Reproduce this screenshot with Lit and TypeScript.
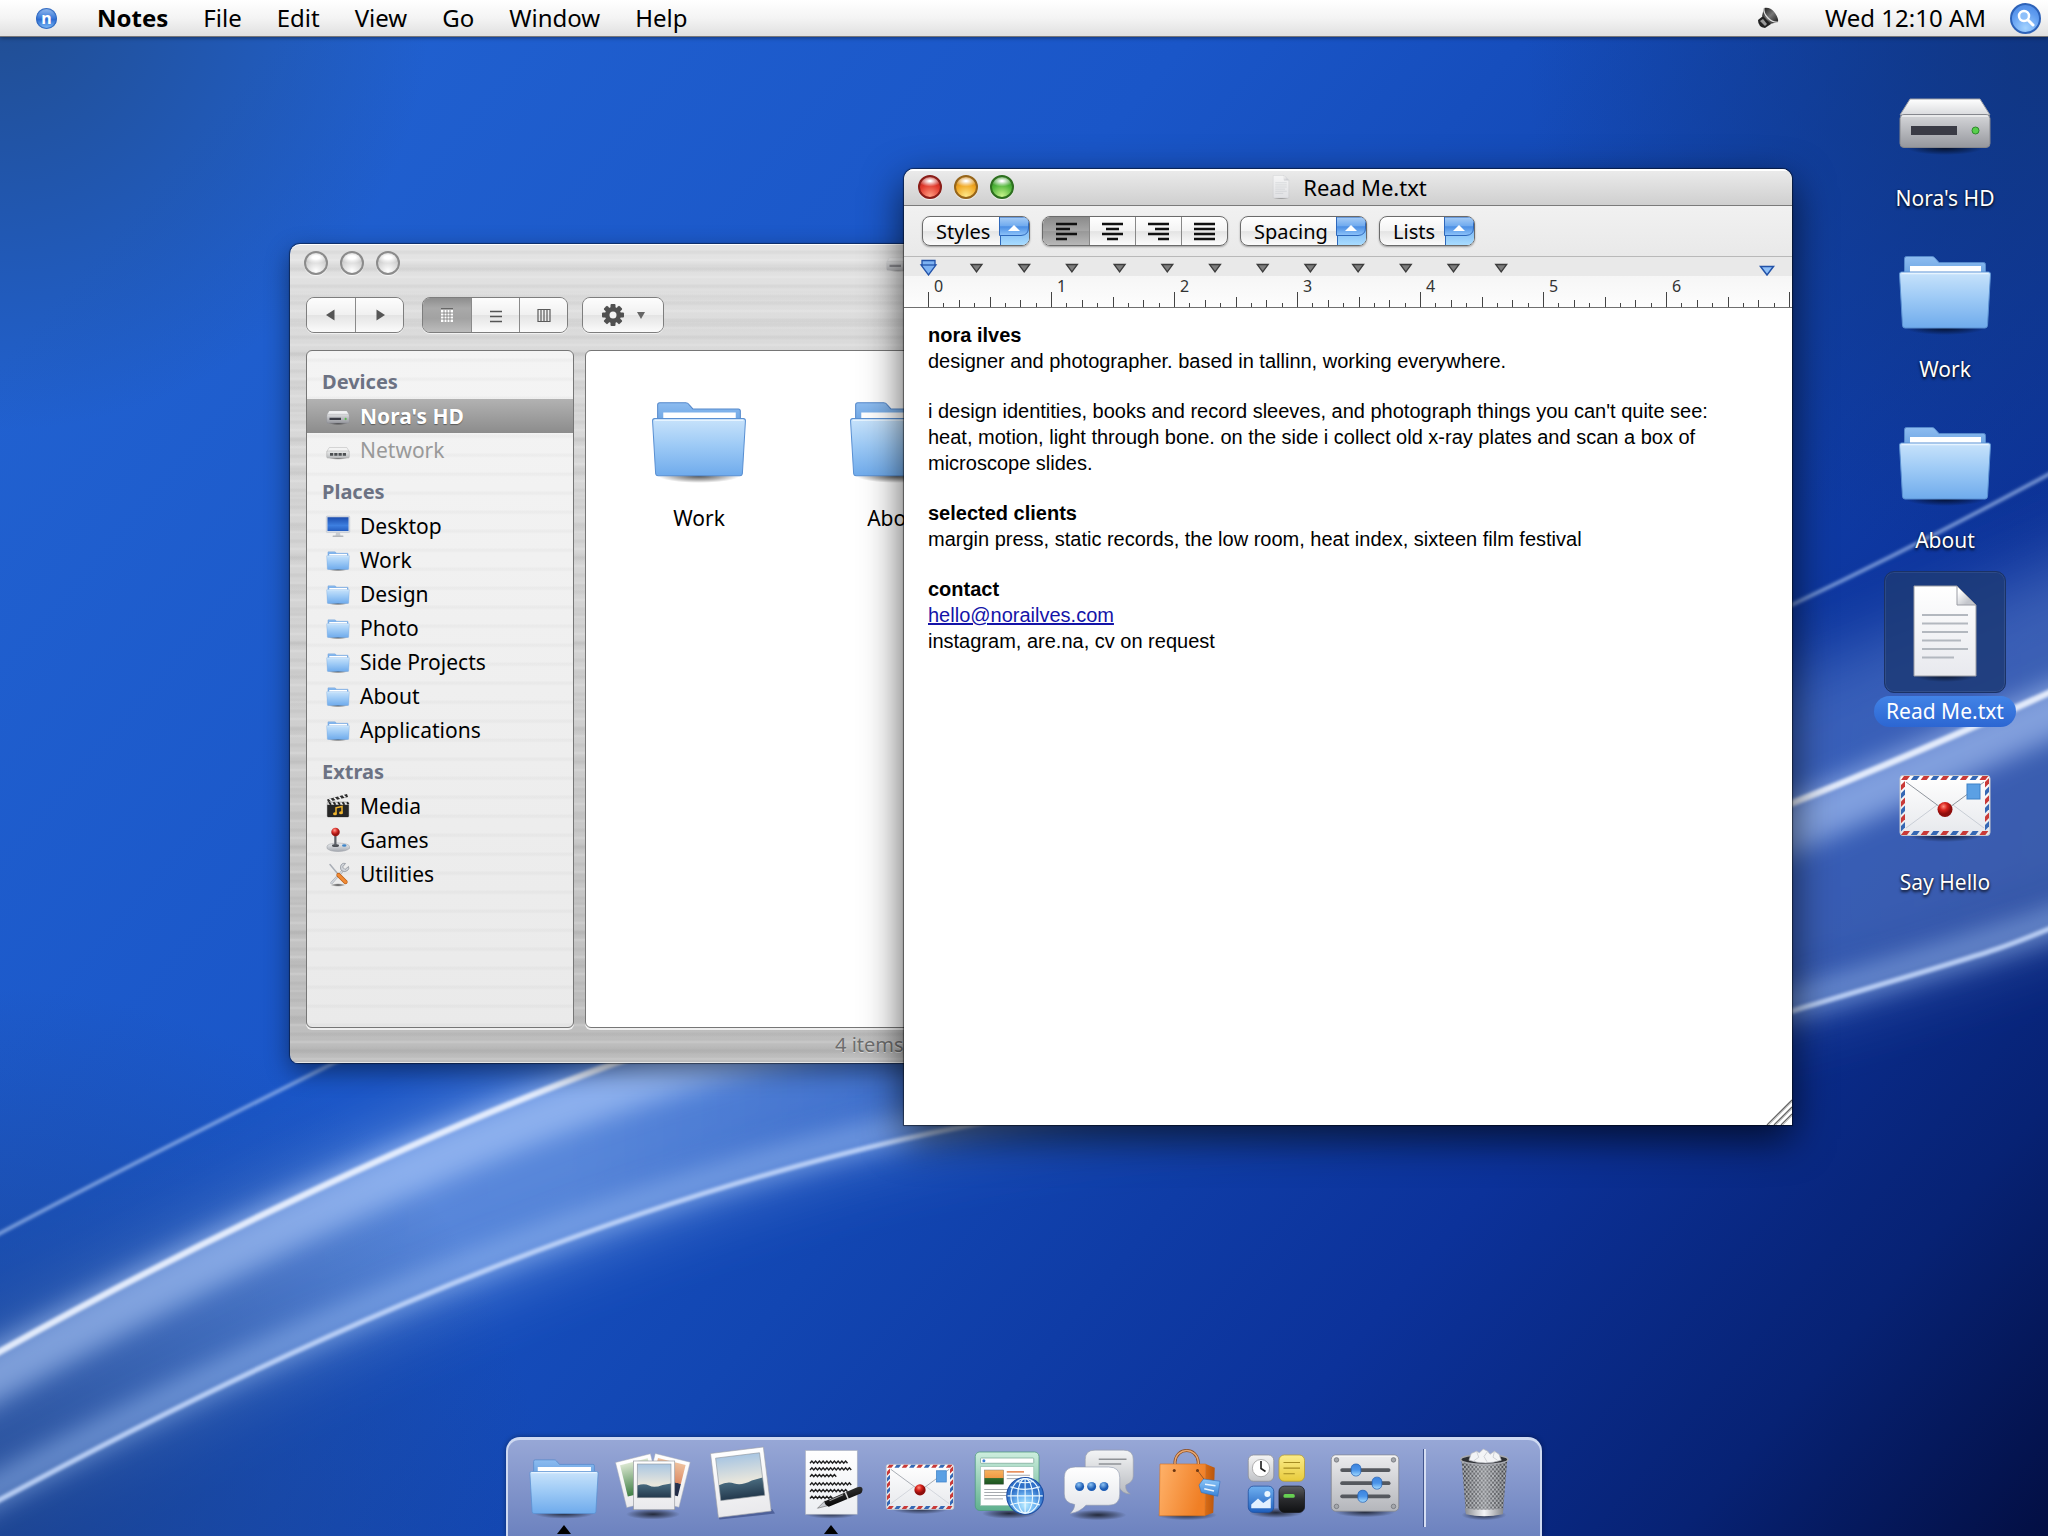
import { LitElement, html, svg, css, nothing } from "lit";
import { customElement, property } from "lit/decorators.js";
import { classMap } from "lit/directives/class-map.js";

/* ---------- icon artwork, all on a 96 x 96 grid ---------- */

const shadow = (cy: number, rx = 38) =>
  svg`<ellipse cx="48" cy=${cy} rx=${rx} ry="7" fill="url(#sh)" />`;

const folder = () => svg`
  <defs>
    <linearGradient id="fa" x2="0" y2="1"><stop offset="0" stop-color="#c8e3fb"/><stop offset=".45" stop-color="#9fcbf6"/><stop offset="1" stop-color="#6fabec"/></linearGradient>
    <linearGradient id="fb" x2="0" y2="1"><stop offset="0" stop-color="#8dbcf0"/><stop offset="1" stop-color="#6ea6e4"/></linearGradient>
  </defs>
  ${shadow(86, 40)}
  <path d="M7.500 32V16.500Q7.500 14.500 9.500 14.500H35Q37 14.500 38 16L42 20.500H86.500Q88.500 20.500 88.500 22.500V32Z" fill="url(#fb)" stroke="#5689cb"/>
  <path d="M13 24H84V32H13Z" fill="#fff"/>
  <path d="M2.500 32Q2.500 30 4.500 30H91.500Q93.500 30 93.500 32L90.500 83.500Q90.300 86 88 86H8Q5.700 86 5.500 83.500Z" fill="url(#fa)" stroke="#5a90d2"/>
  <path d="M4.500 31.500H91.500" stroke="#e6f4ff" stroke-width="1.500"/>`;

const drive = () => svg`
  <defs>
    <linearGradient id="da" x2="0" y2="1"><stop offset="0" stop-color="#fff"/><stop offset="1" stop-color="#d9dadd"/></linearGradient>
    <linearGradient id="db" x2="0" y2="1"><stop offset="0" stop-color="#d6d7da"/><stop offset="1" stop-color="#95979d"/></linearGradient>
  </defs>
  ${shadow(77)}
  <path d="M13 28H83L93 44H3Z" fill="url(#da)" stroke="#9b9da3"/>
  <rect x="3" y="43.500" width="90" height="33" rx="4" fill="url(#db)" stroke="#85878d"/>
  <path d="M5 45H91" stroke="#fff"/>
  <rect x="14" y="55" width="46" height="9" fill="#3a3b45"/>
  <circle cx="78.500" cy="59.500" r="3.500" fill="#58cf4c" stroke="#2c8a2a"/>`;

const network = () => svg`
  <defs>
    <linearGradient id="na" x2="0" y2="1"><stop offset="0" stop-color="#eceded"/><stop offset="1" stop-color="#b9bbbd"/></linearGradient>
  </defs>
  ${shadow(80)}
  <path d="M13 38H83L93 54H3Z" fill="#f3f3f3" stroke="#b5b5b5" stroke-width="2"/>
  <rect x="3" y="52" width="90" height="28" rx="4" fill="url(#na)" stroke="#a5a5a5" stroke-width="2"/>
  <path d="M16 60h13v11h-13zM33 60h13v11h-13zM50 60h13v11h-13zM67 60h13v11h-13z" fill="#4c4f52"/>`;

const monitor = () => svg`
  <defs>
    <linearGradient id="ma" x2="0" y2="1"><stop offset="0" stop-color="#1b4cae"/><stop offset=".6" stop-color="#3d7fe0"/><stop offset="1" stop-color="#245dc0"/></linearGradient>
  </defs>
  <rect x="1" y="8" width="94" height="66" rx="4" fill="#d5dbe4" stroke="#b8bec8" stroke-width="2"/>
  <rect x="6" y="13" width="84" height="55" fill="url(#ma)"/>
  <path d="M40 74H56L58 88H38Z" fill="#c9ccd1"/>
  <rect x="26" y="86" width="44" height="6" rx="3" fill="#b4b7bc"/>`;

const page = () => svg`
  <defs>
    <linearGradient id="pa" x2="0" y2="1"><stop offset="0" stop-color="#fff"/><stop offset="1" stop-color="#e8e9ee"/></linearGradient>
    <linearGradient id="pb" x2="1" y2="1"><stop offset=".2" stop-color="#fff"/><stop offset=".7" stop-color="#c4c6cc"/></linearGradient>
  </defs>
  ${shadow(91, 33)}
  <path d="M17 2H60L79 21V92H17Z" fill="url(#pa)" stroke="#9a9ca4"/>
  <path d="M60 2V21H79Z" fill="url(#pb)" stroke="#9a9ca4"/>
  <path d="M25 31H71M25 39.500H71M25 48H71M25 56.500H64M25 65H71M25 73.500H57" stroke="#b3b8bf" stroke-width="2"/>`;

const stripeRow = (x: number, y: number, n: number, step: number, vertical: boolean) =>
  Array.from({ length: n }, (_, i) => {
    const fill = i % 2 ? "#3568b4" : "#c93a38";
    const px = vertical ? x : x + i * step;
    const py = vertical ? y + i * step : y;
    return vertical
      ? svg`<path d="M${px} ${py + 4}L${px + 4} ${py}V${py + 5.500}L${px} ${py + 9.500}Z" fill=${fill}/>`
      : svg`<path d="M${px} ${py + 4}L${px + 3} ${py}H${px + 9}L${px + 6} ${py + 4}Z" fill=${fill}/>`;
  });

const mail = () => svg`
  <defs>
    <linearGradient id="ea" x2="0" y2="1"><stop offset="0" stop-color="#fff"/><stop offset="1" stop-color="#e6e8ec"/></linearGradient>
    <radialGradient id="eb" cx=".4" cy=".3"><stop offset="0" stop-color="#ff8f80"/><stop offset=".5" stop-color="#d9231c"/><stop offset="1" stop-color="#8e0d0c"/></radialGradient>
  </defs>
  ${shadow(80)}
  <rect x="3" y="20.500" width="90" height="60" rx="3" fill="url(#ea)" stroke="#c3c7cf"/>
  ${stripeRow(4, 21, 9, 9.800, false)}
  ${stripeRow(4, 76, 9, 9.800, false)}
  ${stripeRow(4, 26, 6, 8.200, true)}
  ${stripeRow(88, 23, 6, 8.600, true)}
  <path d="M9 73L40 50M87 73L56 50" stroke="#c9ced6"/>
  <path d="M9 27L43 52M87 27L53 52" stroke="#8f959d"/>
  <rect x="70" y="29" width="13" height="15" fill="#5ba0e4" stroke="#3f82c8"/>
  <circle cx="48" cy="54.500" r="7.500" fill="url(#eb)"/>`;

const scene = (w: number, h: number) => svg`
  <rect width=${w} height=${h} fill="url(#sky)"/>
  <path d="M0 ${h * 0.640}Q${w * 0.200} ${h * 0.560} ${w * 0.350} ${h * 0.640}T${w * 0.750} ${h * 0.620}L${w} ${h * 0.580}V${h}H0Z" fill="url(#sea)"/>
  <rect width=${w} height=${h} fill="none" stroke="#8d949c" stroke-width=".8"/>`;

const sceneDefs = svg`
  <linearGradient id="sky" x2="0" y2="1"><stop offset="0" stop-color="#a9c6e2"/><stop offset=".6" stop-color="#e8e6dc"/></linearGradient>
  <linearGradient id="sea" x2="0" y2="1"><stop offset="0" stop-color="#4a6c80"/><stop offset="1" stop-color="#23394d"/></linearGradient>
  <linearGradient id="card" x2="0" y2="1"><stop offset="0" stop-color="#fff"/><stop offset="1" stop-color="#e9e9ec"/></linearGradient>`;

const photos = () => svg`
  <defs>${sceneDefs}
    <linearGradient id="gr" x2="0" y2="1"><stop offset="0" stop-color="#d9e6cf"/><stop offset="1" stop-color="#3f7f45"/></linearGradient>
    <linearGradient id="or" x2="0" y2="1"><stop offset="0" stop-color="#eec09c"/><stop offset=".6" stop-color="#dd8c66"/><stop offset=".62" stop-color="#2a3450"/><stop offset="1" stop-color="#1f2944"/></linearGradient>
  </defs>
  ${shadow(87, 36)}
  <g transform="translate(-2 18) rotate(-14)"><rect width="48" height="62" fill="url(#card)" stroke="#a9adb5" stroke-width=".6"/><rect x="5" y="5" width="38" height="43" fill="url(#gr)"/></g>
  <g transform="translate(51 6) rotate(14)"><rect width="48" height="62" fill="url(#card)" stroke="#a9adb5" stroke-width=".6"/><rect x="5" y="5" width="38" height="43" fill="url(#or)"/></g>
  <rect x="22" y="16" width="55" height="65" fill="url(#card)" stroke="#8c9097" stroke-width=".8"/>
  <g transform="translate(27 20)">${scene(45, 45)}</g>`;

const polaroid = () => svg`
  <defs>${sceneDefs}</defs>
  <path d="M18 94L92 86L88 80L16 88Z" fill="#14245c" opacity=".4"/>
  <g transform="translate(6 6) rotate(-7)"><rect width="71" height="86" fill="url(#card)" stroke="#9da1a9" stroke-width=".8"/><g transform="translate(6 7)">${scene(59, 57)}</g></g>`;

const squiggle = (x2: number, y: number) => {
  let d = `M20 ${y}`;
  for (let x = 20; x < x2; x += 5) d += `l2.500 -3l2.500 3`;
  return svg`<path d=${d} fill="none" stroke="#1e1e1e" stroke-width="1.800"/>`;
};

const notes = () => svg`
  <defs>
    <linearGradient id="ta" x2="0" y2="1"><stop offset="0" stop-color="#fff"/><stop offset="1" stop-color="#eceef2"/></linearGradient>
    <linearGradient id="tb" x2=".4" y2="1"><stop offset="0" stop-color="#8a8a8a"/><stop offset=".35" stop-color="#2c2c2c"/><stop offset="1" stop-color="#000"/></linearGradient>
  </defs>
  ${shadow(86, 36)}
  <rect x="14" y="2" width="69" height="85" fill="url(#ta)" stroke="#aeb3bf" stroke-width=".8"/>
  ${squiggle(67, 19)}${squiggle(72, 28)}${squiggle(54, 37)}
  ${squiggle(72, 48)}${squiggle(70, 57)}${squiggle(46, 66)}
  <path d="M30 79L40 69L46 75Z" fill="#c9ccd2" stroke="#666" stroke-width=".8"/>
  <path d="M39 70L83 51Q90 49 90 54Q90 58 86 60L45 77Q40 75 39 70Z" fill="url(#tb)"/>
  <path d="M67 57.500L71 67" stroke="#d6d6d6" stroke-width="2"/>
  <path d="M46 69L64 61" stroke="#9a9a9a" stroke-width="1.500"/>`;

const browser = () => svg`
  <defs>
    <linearGradient id="wa" x2="0" y2="1"><stop offset="0" stop-color="#cdeede"/><stop offset="1" stop-color="#5fb08e"/></linearGradient>
    <linearGradient id="wb" x2="0" y2="1"><stop offset="0" stop-color="#f7b35f"/><stop offset=".55" stop-color="#f09a45"/><stop offset=".6" stop-color="#2f6b2d"/><stop offset="1" stop-color="#1d5320"/></linearGradient>
    <radialGradient id="wc" cx=".5" cy=".75"><stop offset="0" stop-color="#b9ecff"/><stop offset=".5" stop-color="#72b8f4"/><stop offset="1" stop-color="#2f70c8"/></radialGradient>
  </defs>
  ${shadow(86, 36)}
  <rect x="3" y="4" width="85" height="78" rx="6" fill="url(#wa)" stroke="#4d9a7c"/>
  <rect x="10" y="12" width="71" height="7" rx="1" fill="#fff" stroke="#7aa895"/>
  <circle cx="14.500" cy="15.500" r="2" fill="#3c7fd6"/>
  <rect x="10" y="23.500" width="71" height="52" fill="#fff" stroke="#9cc5b4"/>
  <rect x="15" y="28" width="26" height="19" fill="url(#wb)" stroke="#777" stroke-width=".6"/>
  <path d="M45 30.500H68" stroke="#e4824a" stroke-width="2"/>
  <path d="M45 35H76M45 39.500H64M15 54H50M15 58H46M15 62H44M15 66.500H40" stroke="#a3a8ad" stroke-width="1.300"/>
  <circle cx="69.500" cy="62.500" r="24.500" fill="url(#wc)" stroke="#1d4fa5" stroke-width="1.500"/>
  <g fill="none" stroke="#eaf8ff" stroke-width="1.500">
    <ellipse cx="69.500" cy="62.500" rx="10" ry="23"/><ellipse cx="69.500" cy="62.500" rx="19" ry="23"/>
    <path d="M69.500 39V86M46 62.500H93M50 50.500Q69.500 57 89 50.500M50 74.500Q69.500 68 89 74.500M58 43Q69.500 47 81 43"/>
  </g>`;

const chat = () => svg`
  <defs>
    <linearGradient id="ca" x2="0" y2="1"><stop offset="0" stop-color="#fff"/><stop offset="1" stop-color="#e2e4e9"/></linearGradient>
    <linearGradient id="cb" x2="0" y2="1"><stop offset="0" stop-color="#f4f5f6"/><stop offset="1" stop-color="#b7babf"/></linearGradient>
    <radialGradient id="cc" cx=".4" cy=".3"><stop offset="0" stop-color="#8cc3f5"/><stop offset="1" stop-color="#1d5cb4"/></radialGradient>
  </defs>
  ${shadow(88, 38)}
  <path d="M44 1.500H82Q95 1.500 95 14V36Q95 44 85 48Q84 56 91 60Q80 60 75 49H44Q31 49 31 36V14Q31 1.500 44 1.500Z" fill="url(#cb)" stroke="#9b9fa8" stroke-width=".8"/>
  <path d="M49 13.500H86M49 20H79" stroke="#8f9296" stroke-width="2"/>
  <path d="M18 24H62Q77 24 77 38V60Q77 75 62 75H32Q24 84 11 86Q17 80 17 74Q3 72 3 60V38Q3 24 18 24Z" fill="url(#ca)" stroke="#8d97ad" stroke-width=".8"/>
  <circle cx="23.500" cy="50" r="6" fill="url(#cc)"/><circle cx="39.500" cy="50" r="6" fill="url(#cc)"/><circle cx="56" cy="50" r="6" fill="url(#cc)"/>`;

const bag = () => svg`
  <defs>
    <linearGradient id="ba" x2="1" y2=".3"><stop offset="0" stop-color="#ffb26a"/><stop offset="1" stop-color="#f07f25"/></linearGradient>
    <linearGradient id="bb" x2="1"><stop offset="0" stop-color="#d96c16"/><stop offset="1" stop-color="#b9560d"/></linearGradient>
    <linearGradient id="bc" x2="0" y2="1"><stop offset="0" stop-color="#8cc6f8"/><stop offset="1" stop-color="#3b84d8"/></linearGradient>
  </defs>
  ${shadow(88, 40)}
  <path d="M73 20L85 25L83 85L72 89Z" fill="url(#bb)"/>
  <path d="M12 20H73L72 89H11Z" fill="url(#ba)" stroke="#d8701a" stroke-width=".8"/>
  <path d="M32 20V17C34 -3 61 -3 63 17V20" fill="none" stroke="#8a4a1c" stroke-width="4"/>
  <path d="M32 20V17C34 -3 61 -3 63 17V20" fill="none" stroke="#e8a873" stroke-width="2"/>
  <circle cx="31" cy="28.500" r="2" fill="#6a3410"/><circle cx="62" cy="28.500" r="2" fill="#6a3410"/>
  <path d="M62 28.500L72 42" stroke="#7a4a2a"/>
  <path d="M64 48L70 40L92 43L89 63L67 58Z" fill="url(#bc)" stroke="#2f6fc0" stroke-width=".8"/>
  <path d="M72 47L86 49M71 53L84 56" stroke="#eaf5ff" stroke-width="2"/>`;

const widgets = () => svg`
  <defs>
    <linearGradient id="ga" x2="0" y2="1"><stop offset="0" stop-color="#f4f4f4"/><stop offset="1" stop-color="#c2c4c8"/></linearGradient>
    <linearGradient id="gb" x2="0" y2="1"><stop offset="0" stop-color="#fbec8a"/><stop offset="1" stop-color="#e8cb3c"/></linearGradient>
    <linearGradient id="gc" x2="0" y2="1"><stop offset="0" stop-color="#6fb0f0"/><stop offset="1" stop-color="#1f5fbe"/></linearGradient>
    <linearGradient id="gd" x2="0" y2="1"><stop offset="0" stop-color="#5a5c60"/><stop offset=".5" stop-color="#2a2b2e"/><stop offset="1" stop-color="#101113"/></linearGradient>
  </defs>
  ${shadow(85, 36)}
  <rect x="11" y="8" width="34" height="35" rx="7" fill="url(#ga)" stroke="#8b8e94"/>
  <circle cx="28" cy="25.500" r="11.500" fill="#fff" stroke="#999"/><path d="M28 16V26L34 30" fill="none" stroke="#222" stroke-width="2.200"/>
  <rect x="52" y="8" width="34" height="35" rx="7" fill="url(#gb)" stroke="#b79c2b"/>
  <path d="M58 18H80M58 25.500H80M58 33H73" stroke="#a58c22" stroke-width="1.600"/>
  <rect x="11" y="49.500" width="34" height="35" rx="7" fill="url(#gc)" stroke="#1c4f9f"/>
  <circle cx="36.500" cy="60" r="4" fill="#eaf6ff"/><path d="M15 79V74L24 66L31 72L41 65V79Z" fill="#e2f0ff"/>
  <rect x="52" y="49.500" width="34" height="35" rx="7" fill="url(#gd)" stroke="#16171a"/>
  <rect x="58" y="60" width="15" height="5" rx="2" fill="#66cf52"/>`;

const sliderRow = (y: number, x: number) => svg`
  <rect x="15" y=${y - 2.500} width="67" height="5" rx="2.500" fill="#55585e"/>
  <rect x=${x - 6.500} y=${y - 8} width="13" height="16" rx="6" fill="url(#sc)" stroke="#2360b4"/>`;

const settings = () => svg`
  <defs>
    <linearGradient id="sa" x2="0" y2="1"><stop offset="0" stop-color="#ececee"/><stop offset="1" stop-color="#b4b6bb"/></linearGradient>
    <linearGradient id="sc" x2="0" y2="1"><stop offset="0" stop-color="#3b82dc"/><stop offset=".5" stop-color="#4a94ea"/><stop offset="1" stop-color="#a5dcff"/></linearGradient>
  </defs>
  ${shadow(84, 40)}
  <rect x="3" y="8" width="90" height="75" rx="6" fill="url(#sa)" stroke="#80838a"/>
  <path d="M7 9.500H89" stroke="#fff"/>
  ${sliderRow(28, 36)}${sliderRow(45.500, 64)}${sliderRow(63, 45)}
  <g fill="#a4a7ac" stroke="#6d7076"><circle cx="10" cy="14.500" r="3"/><circle cx="86" cy="14.500" r="3"/><circle cx="10" cy="76.500" r="3"/><circle cx="86" cy="76.500" r="3"/></g>`;

const trash = () => svg`
  <defs>
    <pattern id="mesh" width="5" height="6" patternUnits="userSpaceOnUse"><path d="M0 0L5 6M5 0L0 6" stroke="#d4d6da" stroke-width="1"/></pattern>
    <linearGradient id="ra" x2="1"><stop offset="0" stop-color="#43454a"/><stop offset=".5" stop-color="#84868a"/><stop offset="1" stop-color="#3c3e43"/></linearGradient>
    <linearGradient id="rb" x2="1"><stop offset="0" stop-color="#8b8d92"/><stop offset=".5" stop-color="#f4f4f6"/><stop offset="1" stop-color="#85878c"/></linearGradient>
  </defs>
  ${shadow(88, 30)}
  <path d="M18 14L24 86Q48 92 73 86L79 14Z" fill="url(#ra)"/>
  <path d="M18 14L24 86Q48 92 73 86L79 14Z" fill="url(#mesh)"/>
  <path d="M22.500 79Q48 83 74 79L73 87Q48 92 24 87Z" fill="url(#rb)"/>
  <ellipse cx="48.500" cy="14" rx="31.500" ry="6.500" fill="#2e3034" stroke="#a8aab0" stroke-width="2"/>
  <path d="M28 15L31 6L38 3L42 5L47 0L53 3L56 7L62 3L68 7L71 15Q50 22 28 15Z" fill="#f3f4f6" stroke="#b7bac0"/>
  <path d="M38 3L41 11L34 16M53 3L48 10L52 17M62 3L60 11L66 15" fill="none" stroke="#c3c6cc"/>`;

const media = () => svg`
  <path d="M4 22L84 0L88 12L8 32Z" fill="#2b2b2b"/>
  <path d="M14 19L24 29M32 14L42 24M50 9L60 19M68 4L78 14" stroke="#f4f4f4" stroke-width="7"/>
  <rect x="5" y="32" width="86" height="60" rx="4" fill="#262626" stroke="#111"/>
  <path d="M5 33H91V43H5Z" fill="#f3f3f3"/><path d="M12 33L20 43M30 33L38 43M48 33L56 43M66 33L74 43M84 33L90 41" stroke="#222" stroke-width="8"/>
  <path d="M40 78V55L64 50V74" fill="none" stroke="#f0b52e" stroke-width="6"/>
  <ellipse cx="36" cy="79" rx="8" ry="6" fill="#f0b52e"/><ellipse cx="60" cy="75" rx="8" ry="6" fill="#f0b52e"/>`;

const games = () => svg`
  <defs><radialGradient id="ja" cx=".4" cy=".3"><stop offset="0" stop-color="#ff9a90"/><stop offset=".6" stop-color="#d8302a"/><stop offset="1" stop-color="#9b1512"/></radialGradient>
  <linearGradient id="jb" x2="0" y2="1"><stop offset="0" stop-color="#eff1f4"/><stop offset="1" stop-color="#a5a9b0"/></linearGradient></defs>
  <path d="M4 74Q4 62 48 60Q94 62 94 74V82Q80 94 48 94Q16 94 4 82Z" fill="url(#jb)" stroke="#979ba3" stroke-width="2"/>
  <ellipse cx="38" cy="70" rx="14" ry="6" fill="#4b4f55"/>
  <rect x="33" y="28" width="9" height="42" rx="3" fill="#5c6067"/>
  <circle cx="38" cy="16" r="17" fill="url(#ja)"/>
  <ellipse cx="73" cy="70" rx="9" ry="5" fill="#3f86c9"/>`;

const tools = () => svg`
  ${shadow(92, 30)}
  <path d="M22 84L66 36" stroke="#9a9fa7" stroke-width="9" stroke-linecap="round"/>
  <path d="M22 84L66 36" stroke="#d3d7dd" stroke-width="6" stroke-linecap="round"/>
  <path d="M90 18L76 30L66 20L78 6Q62 2 58 18Q56 30 64 36Q76 42 86 34Q94 28 90 18Z" fill="#cfd3d9" stroke="#8b9098" stroke-width="3"/>
  <path d="M16 10L46 46" stroke="#a9aeb6" stroke-width="6" stroke-linecap="round"/>
  <path d="M50 52L78 80" stroke="#b8590f" stroke-width="17" stroke-linecap="round"/>
  <path d="M50 52L78 80" stroke="#f08a34" stroke-width="12" stroke-linecap="round"/>`;

const ART: Record<string, () => unknown> = {
  folder, drive, network, monitor, page, mail, photos, polaroid, notes,
  browser, chat, bag, widgets, settings, trash, media, games, tools,
};

@customElement("os-icon")
class OsIcon extends LitElement {
  @property() name = "folder";
  @property({ type: Number }) size = 96;

  static styles = css`
    :host { display: block; flex: none; line-height: 0; }
    svg { display: block; overflow: visible; }
  `;

  render() {
    return html`<svg width=${this.size} height=${this.size} viewBox="0 0 96 96" aria-hidden="true">
      <defs><radialGradient id="sh"><stop offset="0" stop-color="#000" stop-opacity=".7"/><stop offset=".6" stop-color="#000" stop-opacity=".3"/><stop offset="1" stop-color="#000" stop-opacity="0"/></radialGradient></defs>
      ${(ART[this.name] ?? folder)()}
    </svg>`;
  }
}

const uiFont = css`"Noto Sans", "Open Sans", sans-serif`;

/* ---------- traffic lights ---------- */

@customElement("window-lights")
class WindowLights extends LitElement {
  @property({ type: Boolean }) active = false;

  static styles = css`
    :host { display: flex; gap: 12px; }
    button {
      width: 24px; height: 24px; padding: 0; border-radius: 50%;
      border: 2px solid #8b8b8b; box-shadow: 0 1px 0 #ffffffb0;
      background: radial-gradient(ellipse 60% 30% at 50% 22%, #fff 30%, #ffffff00), radial-gradient(circle at 50% 90%, #ffffff, #c4c4c4 75%);
    }
    .red { border-color: #8a1d18; background: radial-gradient(ellipse 55% 28% at 50% 20%, #fff 10%, #ffffff00), radial-gradient(circle at 50% 95%, #ff9b80, #e0392c 55%, #a8211a); }
    .amber { border-color: #96651a; background: radial-gradient(ellipse 55% 28% at 50% 20%, #fff 10%, #ffffff00), radial-gradient(circle at 50% 95%, #ffe98a, #f0a622 55%, #b87412); }
    .green { border-color: #2d6f1f; background: radial-gradient(ellipse 55% 28% at 50% 20%, #fff 10%, #ffffff00), radial-gradient(circle at 50% 95%, #c8f58c, #4fb43a 55%, #2d7f20); }
  `;

  render() {
    const kinds: [string, string][] = [["red", "Close"], ["amber", "Minimize"], ["green", "Zoom"]];
    return kinds.map(([c, l]) => html`<button class=${this.active ? c : ""} aria-label=${l}></button>`);
  }
}

/* ---------- finder window ---------- */

const SIDEBAR = [
  { title: "Devices", items: [["drive", "Nora's HD"], ["network", "Network"]] },
  { title: "Places", items: [["monitor", "Desktop"], ["folder", "Work"], ["folder", "Design"], ["folder", "Photo"], ["folder", "Side Projects"], ["folder", "About"], ["folder", "Applications"]] },
  { title: "Extras", items: [["media", "Media"], ["games", "Games"], ["tools", "Utilities"]] },
];

const FILES = [["folder", "Work"], ["folder", "About"]];

@customElement("finder-window")
class FinderWindow extends LitElement {
  static styles = css`
    :host {
      display: flex; flex-direction: column; box-sizing: border-box; overflow: hidden;
      border-radius: 10px 10px 8px 8px; font-family: ${uiFont}; font-size: 21px; color: #000;
      border-top: 1px solid #fff;
      box-shadow: 0 0 1px 1px #00000070, 0 8px 24px #0007;
      background:
        repeating-linear-gradient(#0000 0 5px, #00000009 6px 8px, #0000 10px 13px, #ffffff30 15px, #0000 17px),
        repeating-linear-gradient(#0000 0 17px, #0000000a 21px, #0000 29px),
        linear-gradient(#e4e4e4, #dadada 12%, #d2d2d2 50%, #bcbcbc);
    }
    .title { display: grid; grid-template-columns: 1fr auto 1fr; align-items: center; height: 36px; padding: 0 14px; }
    .name { display: flex; align-items: center; gap: 10px; font-size: 22px; color: #666; }
    .name os-icon { opacity: .5; }
    .tools { display: flex; gap: 16px; padding: 16px 16px 16px; }
    .group { display: flex; height: 34px; border: 1px solid #7e7e7e; border-radius: 8px; overflow: hidden; box-shadow: 0 1px 0 #fff9; }
    .group button {
      display: flex; align-items: center; justify-content: center; min-width: 48px; padding: 0;
      border: 0; border-left: 1px solid #8a8a8a; background: linear-gradient(#fdfdfd, #f0f0f0 50%, #e4e4e4 51%, #fbfbfb);
    }
    .group button:first-child { border-left: 0; }
    .group .on { background: linear-gradient(#8e8e8e, #a9a9a9 30%, #a2a2a2 60%, #bcbcbc); }
    .group .gear { width: 80px; gap: 11px; }
    .nav { margin-right: 2px; }
    .view { margin-right: -2px; }
    .body { flex: 1; display: grid; grid-template-columns: 268px 1fr; gap: 11px; padding: 1px 16px 0; min-height: 0; }
    nav, .files { border: 1px solid #767676; border-radius: 6px; box-shadow: 0 2px 0 #ffffffc0; }
    nav {
      padding-top: 14px;
      background: repeating-linear-gradient(#0000 0 7px, #00000006 8px 10px, #0000 12px 19px), linear-gradient(#f4f4f4, #eaeaea);
    }
    h2 { margin: 0; height: 34px; line-height: 34px; padding-left: 15px; font-size: 20px; font-weight: 700; color: #6c7283; }
    ul { list-style: none; margin: 0 0 8px; padding: 0; }
    li button {
      display: flex; align-items: center; gap: 10px; width: 100%; height: 34px; padding: 0 0 0 19px;
      border: 0; background: none; font: inherit; color: #000; text-align: left;
    }
    li .sel { background: linear-gradient(#b2b2b2, #8c8c8c); color: #fff; font-weight: 700; text-shadow: 0 1px 1px #0006; }
    li .dim { color: #999; }
    .files { display: grid; grid-template-columns: repeat(auto-fill, 198px); align-content: start; padding: 37px 14px; background: #fff; }
    .file { display: flex; flex-direction: column; align-items: center; gap: 18px; border: 0; background: none; padding: 0; font: inherit; color: #000; line-height: 28px; }
    footer { height: 34px; line-height: 34px; padding-left: 545px; font-size: 20px; color: #6d6d6d; text-shadow: 0 1px 0 #fff8; border-bottom: 1px solid #e6e6e6; }
    .g { display: block; }
  `;

  render() {
    const glyph = (body: unknown, w = 18) => html`<svg class="g" width=${w} height="18" viewBox="0 0 ${w} 18" aria-hidden="true">${body}</svg>`;
    return html`
      <div class="title"><window-lights></window-lights><span class="name"><os-icon name="drive" size="24"></os-icon>Nora's HD</span></div>
      <div class="tools">
        <div class="group nav">
          <button aria-label="Back">${glyph(svg`<path d="M12.500 3.500V14.500L4 9Z" fill="#555"/>`)}</button>
          <button aria-label="Forward">${glyph(svg`<path d="M5.500 3.500V14.500L14 9Z" fill="#555"/>`)}</button>
        </div>
        <div class="group view">
          <button class="on" aria-label="Icon view">${glyph(svg`<path d="M3 2.500H15" stroke="#666"/><path d="M3 4H15V16H3Z" fill="#fff"/><path d="M6 4V16M9 4V16M12 4V16M3 7H15M3 10H15M3 13H15" stroke="#777" stroke-width=".8"/>`)}</button>
          <button aria-label="List view">${glyph(svg`<path d="M3 5.500H15M3 10.500H15M3 15.500H15" stroke="#555" stroke-width="1.500"/>`)}</button>
          <button aria-label="Column view">${glyph(svg`<path d="M3 3.500H15V15.500H3ZM6 3.500V15.500M9 3.500V15.500M12 3.500V15.500" fill="none" stroke="#5a5a5a" stroke-width="1.200"/>`)}</button>
        </div>
        <div class="group">
          <button class="gear" aria-label="Actions">
            <svg class="g" width="24" height="24" viewBox="-12 -12 24 24" aria-hidden="true">
              ${[0, 45, 90, 135].map((a) => svg`<rect x="-2.500" y="-11" width="5" height="22" rx="1" fill="#505050" transform="rotate(${a})"/>`)}
              <circle r="8" fill="#505050"/><circle r="3.500" fill="#f3f3f3"/>
            </svg>
            <svg class="g" width="10" height="10" viewBox="0 0 10 10" aria-hidden="true"><path d="M1 2H9L5 9Z" fill="#666"/></svg>
          </button>
        </div>
      </div>
      <div class="body">
        <nav aria-label="Sidebar">
          ${SIDEBAR.map((s) => html`<h2>${s.title}</h2><ul>${s.items.map(([icon, label]) => html`
            <li><button class=${classMap({ sel: label === "Nora's HD", dim: label === "Network" })}><os-icon name=${icon} size="24"></os-icon>${label}</button></li>`)}</ul>`)}
        </nav>
        <div class="files">${FILES.map(([icon, label]) => html`<button class="file"><os-icon name=${icon} size="98"></os-icon>${label}</button>`)}</div>
      </div>
      <footer>4 items</footer>`;
  }
}

/* ---------- text editor window ---------- */

const INCH = 123;

@customElement("note-window")
class NoteWindow extends LitElement {
  static styles = css`
    :host {
      display: flex; flex-direction: column; box-sizing: border-box; overflow: hidden;
      border-radius: 10px 10px 0 0; background: #fff; font-family: ${uiFont}; color: #000;
      box-shadow: 0 0 1px 1px #00000080, 0 14px 40px #000000b0;
    }
    .title {
      display: grid; grid-template-columns: 1fr auto 1fr; align-items: center; height: 36px; padding: 0 14px;
      border-bottom: 1px solid #7a7a7a; box-shadow: inset 0 2px 0 #fff; background: linear-gradient(#ececec, #cfcfcf);
    }
    .name { display: flex; align-items: center; gap: 10px; font-size: 22px; line-height: 30px; }
    .name os-icon { opacity: .6; }
    .tools { display: flex; align-items: center; gap: 12px; height: 50px; padding: 0 18px; background: linear-gradient(#f1f1f1, #e9e9e9); border-bottom: 1px solid #b9b9b9; }
    .pop, .seg { display: flex; box-sizing: border-box; height: 30px; border: 1px solid #6b6b6b; border-radius: 8px; overflow: hidden; box-shadow: 0 1px 2px #0005; background: linear-gradient(#fff, #f3f3f3 50%, #e4e4e4 52%, #fcfcfc); }
    select { appearance: none; border: 0; background: none; padding: 0 8px 0 13px; font: inherit; font-size: 20px; color: #000; }
    .pop svg { display: block; pointer-events: none; }
    .seg button { width: 46px; padding: 0; border: 0; border-left: 1px solid #888; background: none; display: flex; align-items: center; justify-content: center; }
    .seg button:first-child { border-left: 0; background: linear-gradient(#8b8b8b, #a6a6a6 50%, #989898 52%, #b8b8b8); }
    .tabs { height: 19px; background: #e9e9e9; }
    .tabs svg, .scale svg { display: block; }
    .scale { display: grid; height: 31px; border-bottom: 1px solid #6f6f6f; background: linear-gradient(#f6f6f6, #fdfdfd); }
    .scale > * { grid-area: 1 / 1; }
    .nums { display: flex; padding-left: 30px; font-size: 16px; line-height: 20px; color: #333; }
    .nums span { flex: none; width: 123px; }
    article { flex: 1; padding: 14px 44px 14px 24px; font: 20px/26px "Liberation Sans", Arial, sans-serif; }
    p { margin: 0 0 24px; }
    strong { display: block; }
    a { color: #1414a8; }
    .end { display: flex; justify-content: flex-end; }
  `;

  private popup(label: string) {
    return html`<span class="pop"><select aria-label=${label}><option>${label}</option></select>
      <svg width="30" height="28" viewBox="0 0 30 28" aria-hidden="true">
        <defs>
          <linearGradient id="u" x2="0" y2="1"><stop offset="0" stop-color="#a8cdf6"/><stop offset=".5" stop-color="#6ea9ee"/><stop offset=".52" stop-color="#4a8ee4"/><stop offset="1" stop-color="#8fc4fa"/></linearGradient>
          <linearGradient id="d" x2="0" y2="1"><stop offset="0" stop-color="#5b9bea"/><stop offset="1" stop-color="#a8dcff"/></linearGradient>
        </defs>
        <rect x="1" width="29" height="28" fill="url(#d)"/><path d="M1.500 18V28" stroke="#2e68bb"/>
        <path d="M.5 0V18.500H22Q29.500 18 29.500 11V0Z" fill="url(#u)" stroke="#2e68bb"/>
        <path d="M9 14L15 8L21 14Z" fill="#fff"/>
      </svg></span>`;
  }

  render() {
    const lines: Record<string, [number, number][]> = {
      "Align left": [[0, 21], [0, 14], [0, 21], [0, 11]],
      "Align center": [[0, 21], [4, 17], [0, 21], [5, 16]],
      "Align right": [[0, 21], [7, 21], [0, 21], [10, 21]],
      Justify: [[0, 21], [0, 21], [0, 21], [0, 21]],
    };
    const ticks = Array.from({ length: 57 }, (_, i) => {
      const h = i % 8 === 0 ? 15 : i % 4 === 0 ? 10 : i % 2 === 0 ? 7 : 4;
      return svg`<rect x=${Math.round(24 + (i * INCH) / 8)} y=${31 - h} width="1" height=${h} fill="#444"/>`;
    });
    return html`
      <div class="title"><window-lights active></window-lights><span class="name"><os-icon name="page" size="24"></os-icon>Read Me.txt</span></div>
      <div class="tools">
        ${this.popup("Styles")}
        <span class="seg">${Object.entries(lines).map(([label, rows]) => html`<button aria-label=${label}><svg width="21" height="20" viewBox="0 0 21 20" aria-hidden="true">
          ${rows.map(([a, b], i) => svg`<path d="M${a} ${3 + i * 5}H${b}" stroke="#111" stroke-width="2.400"/>`)}</svg></button>`)}</span>
        ${this.popup("Spacing")}${this.popup("Lists")}
      </div>
      <div class="tabs"><svg width="888" height="19" aria-hidden="true">
        ${Array.from({ length: 12 }, (_, i) => svg`<path d="M${67 + i * 47.700} 7.500H${78 + i * 47.700}L${72.500 + i * 47.700} 15Z" fill="#7d7d7d" stroke="#3c3c3c" stroke-width="1.300"/>`)}
        <path d="M18 3.500H31V8H32L24.500 18L17 8H18Z" fill="#7db2f2" stroke="#2252a8" stroke-width="1.300"/><path d="M17 8H32" stroke="#2252a8" stroke-width="1.300"/>
        <path d="M856.500 9.500H869.500L863 18Z" fill="#8fc0f8" stroke="#2252a8" stroke-width="1.500"/>
      </svg></div>
      <div class="scale">
        <svg width="888" height="31" aria-hidden="true">${ticks}</svg>
        <div class="nums">${[0, 1, 2, 3, 4, 5, 6].map((n) => html`<span>${n}</span>`)}</div>
      </div>
      <article>
        <p><strong>nora ilves</strong>designer and photographer. based in tallinn, working everywhere.</p>
        <p>i design identities, books and record sleeves, and photograph things you can't quite see: heat, motion, light through bone. on the side i collect old x-ray plates and scan a box of microscope slides.</p>
        <p><strong>selected clients</strong>margin press, static records, the low room, heat index, sixteen film festival</p>
        <p><strong>contact</strong><a href="mailto:hello@norailves.com">hello@norailves.com</a><br />instagram, are.na, cv on request</p>
      </article>
      <div class="end"><svg width="27" height="27" viewBox="0 0 27 27" aria-hidden="true"><path d="M2 27L27 2M9 27L27 9M16 27L27 16" stroke="#666" stroke-width="1.300"/><path d="M4 27L27 4M11 27L27 11M18 27L27 18" stroke="#ccc"/></svg></div>`;
  }
}

/* ---------- desktop ---------- */

const MENUS = ["File", "Edit", "View", "Go", "Window", "Help"];
const DESKTOP = [["drive", "Nora's HD"], ["folder", "Work"], ["folder", "About"], ["page", "Read Me.txt"], ["mail", "Say Hello"]];
const DOCK: [string, string, boolean?][] = [
  ["folder", "Files", true], ["photos", "Photos"], ["polaroid", "Picture"], ["notes", "Notes", true], ["mail", "Mail"],
  ["browser", "Browser"], ["chat", "Chat"], ["bag", "Shop"], ["widgets", "Widgets"], ["settings", "Settings"],
];

@customElement("app-root")
class AppRoot extends LitElement {
  static styles = css`
    :host {
      display: flex; flex-direction: column; position: relative; min-height: 100vh; overflow: hidden;
      font-family: ${uiFont}; background: #1446b4;
    }
    .wall { position: absolute; inset: 0; width: 100%; height: 100%; }
    header {
      position: relative; display: flex; align-items: center; height: 36px; padding: 0 7px 0 36px; font-size: 24px; color: #000;
      background: linear-gradient(#fff, #f4f4f4 50%, #e0e0e0); border-bottom: 1px solid #77777a; box-shadow: 0 1px 4px #0006;
    }
    header button { border: 0; background: none; padding: 0; font: inherit; color: inherit; }
    header .logo {
      width: 21px; height: 21px; margin-right: 40px; border-radius: 50%; color: #fff; font-size: 16px; line-height: 20px; font-weight: 700;
      background: linear-gradient(#9cc0f0, #3f7edb 45%, #2c6bd2 55%, #86c6fb); box-shadow: inset 0 0 1px 1px #2f66bd;
    }
    .menus { display: flex; gap: 35px; flex: 1; }
    .menus .app { font-weight: 700; }
    .menus, .clock { line-height: 36px; }
    .clock { margin: 0 24px 0 46px; }
    .volume { display: block; }
    header .find {
      display: flex; align-items: center; justify-content: center; width: 31px; height: 31px; border-radius: 50%; border: 2px solid #2d62b8;
      background: radial-gradient(circle at 50% 85%, #a4d3ff, #5f9cf0 60%, #4a86e2);
    }
    .icons { position: relative; align-self: flex-end; flex: 1; display: flex; flex-direction: column; align-items: center; gap: 15px; width: 144px; padding: 21px 31px 0 0; }
    .item { display: flex; flex-direction: column; align-items: center; gap: 3px; padding: 0; border: 0; background: none; font: inherit; font-size: 21px; color: #fff; }
    .tile { padding: 12px; border: 1px solid transparent; border-radius: 10px; }
    .label { height: 31px; line-height: 31px; padding: 0 12px; border-radius: 16px; text-shadow: 0 2px 3px #000c, 0 0 2px #0008; white-space: nowrap; }
    .picked .tile { background: #1c3a76d8; border-color: #1a3266; box-shadow: inset 0 0 0 1px #ffffff14; }
    .picked .label { background: linear-gradient(#4283e6, #2c66d2); text-shadow: none; }
    .finder { position: absolute; left: 290px; top: 244px; width: 1330px; height: 819px; }
    .note { position: absolute; left: 904px; top: 169px; width: 888px; height: 956px; }
    .dock {
      position: relative; align-self: center; display: flex; gap: 17px; padding: 9px 20px 0; height: 87px;
      border: 2px solid #cfdaf2; border-top-width: 3px; border-bottom: 0; border-radius: 14px 14px 0 0; box-shadow: 0 0 5px #0006;
      background: linear-gradient(#97a7d6, #6c82bf);
    }
    .dock button { display: flex; flex-direction: column; align-items: center; gap: 4px; padding: 0; border: 0; background: none; }
    .dock hr { width: 1px; height: 78px; margin: 0 5px; border: 0; border-left: 1px solid #43568f; border-right: 1px solid #d5ddf2; background: #d5ddf2; }
    .dock svg { display: block; }
  `;

  render() {
    return html`
      <svg class="wall" viewBox="0 0 1568 1176" preserveAspectRatio="none" aria-hidden="true">
        <defs>
          <linearGradient id="bg" gradientUnits="userSpaceOnUse" x1="150" y1="100" x2="1500" y2="1250">
            <stop offset="0" stop-color="#2161d0"/><stop offset=".3" stop-color="#1a56c8"/><stop offset=".52" stop-color="#1246b2"/><stop offset=".72" stop-color="#0c329a"/><stop offset=".88" stop-color="#072274"/><stop offset="1" stop-color="#030f44"/>
          </linearGradient>
          <radialGradient id="tl" gradientUnits="userSpaceOnUse" cx="0" cy="0" r="330"><stop offset="0" stop-color="#214a86" stop-opacity=".85"/><stop offset="1" stop-color="#214a86" stop-opacity="0"/></radialGradient>
          <radialGradient id="tr" gradientUnits="userSpaceOnUse" cx="1568" cy="40" r="400"><stop offset="0" stop-color="#10357e" stop-opacity=".9"/><stop offset="1" stop-color="#10357e" stop-opacity="0"/></radialGradient>
          <radialGradient id="bl" gradientUnits="userSpaceOnUse" cx="0" cy="1176" r="420"><stop offset="0" stop-color="#1b3f86" stop-opacity=".8"/><stop offset="1" stop-color="#1b3f86" stop-opacity="0"/></radialGradient>
          <linearGradient id="band" gradientUnits="userSpaceOnUse" x1="0" y1="0" x2="1568" y2="0"><stop offset="0" stop-color="#8fb4ee" stop-opacity=".5"/><stop offset=".28" stop-color="#8fb6f2" stop-opacity=".55"/><stop offset=".55" stop-color="#6f9be6" stop-opacity=".35"/><stop offset="1" stop-color="#7ea2e4" stop-opacity=".42"/></linearGradient>
          <filter id="b1" x="-20%" y="-20%" width="140%" height="140%"><feGaussianBlur stdDeviation="1.200"/></filter>
          <filter id="b2" x="-20%" y="-20%" width="140%" height="140%"><feGaussianBlur stdDeviation="9"/></filter>
          <filter id="b3" x="-20%" y="-20%" width="140%" height="140%"><feGaussianBlur stdDeviation="26"/></filter>
        </defs>
        <rect width="1568" height="1176" fill="url(#bg)"/>
        <rect width="1568" height="1176" fill="url(#tl)"/><rect width="1568" height="1176" fill="url(#tr)"/>
        <path d="M-60 1050C150 940 300 860 468 800C800 680 1200 610 1640 400V690C1200 860 940 830 692 880C440 935 180 1060 -60 1190Z" fill="url(#band)" filter="url(#b3)"/>
        <rect width="1568" height="1176" fill="url(#bl)"/>
        <g fill="none">
          <path d="M-40 1072C150 965 330 880 478 830C760 730 1150 725 1372 632L1640 514" stroke="#bcd6ff" stroke-opacity=".55" stroke-width="40" filter="url(#b2)"/>
          <path d="M-40 1160C180 1040 420 928 692 864C940 810 1200 820 1372 768S1560 712 1640 680" stroke="#a6c6f7" stroke-opacity=".5" stroke-width="24" filter="url(#b2)"/>
          <path d="M-20 955C70 906 165 860 255 814C650 640 1150 580 1372 463Q1480 412 1600 346" stroke="#b3cbf5" stroke-opacity=".6" stroke-width="3" filter="url(#b1)"/>
          <path d="M-20 1046C140 955 320 870 468 815C760 708 1150 705 1372 615Q1480 572 1600 516" stroke="#eef4ff" stroke-opacity=".9" stroke-width="5" filter="url(#b1)"/>
          <path d="M-20 1159C180 1050 420 935 692 872C940 815 1200 825 1372 774S1530 728 1600 698" stroke="#c8dbfb" stroke-opacity=".85" stroke-width="4" filter="url(#b1)"/>
        </g>
      </svg>

      <header>
        <button class="logo" aria-label="System menu">n</button>
        <div class="menus"><button class="app">Notes</button>${MENUS.map((m) => html`<button>${m}</button>`)}</div>
        <button aria-label="Volume"><svg class="volume" width="22" height="22" viewBox="0 0 22 22" aria-hidden="true">
          <defs><linearGradient id="sp" x2="1" y2="1"><stop offset="0" stop-color="#111"/><stop offset=".5" stop-color="#777"/><stop offset="1" stop-color="#111"/></linearGradient></defs>
          <path d="M5 9L7 1Q14 0 18 6Q22 12 21 15L13 17Z" fill="url(#sp)"/><path d="M7 1Q6 6 11 11Q16 16 21 15" fill="none" stroke="#ddd" stroke-width="1.200"/><path d="M1 13L6 9L14 17L8 21Q1 20 1 13Z" fill="#222"/><path d="M3 14L6 12L10 17L8 19Z" fill="#999"/>
        </svg></button>
        <time class="clock">Wed 12:10 AM</time>
        <button class="find" aria-label="Search"><svg width="18" height="18" viewBox="0 0 18 18" aria-hidden="true"><circle cx="7" cy="7" r="5" fill="#8fc0fa" stroke="#fff" stroke-width="2.500"/><path d="M11 11L16 16" stroke="#fff" stroke-width="3" stroke-linecap="round"/></svg></button>
      </header>

      <div class="icons">
        ${DESKTOP.map(([icon, label]) => html`<button class=${classMap({ item: true, picked: label === "Read Me.txt" })}>
          <span class="tile"><os-icon name=${icon} size="96"></os-icon></span><span class="label">${label}</span></button>`)}
      </div>

      <finder-window class="finder" role="region" aria-label="Nora's HD"></finder-window>
      <note-window class="note" role="region" aria-label="Read Me.txt"></note-window>

      <div class="dock" role="toolbar" aria-label="Dock">
        ${DOCK.map(([icon, label, running]) => html`<button aria-label=${label}><os-icon name=${icon} size="72"></os-icon>
          ${running ? html`<svg width="14" height="10" viewBox="0 0 14 10" aria-hidden="true"><path d="M0 9L7 0L14 9Z" fill="#000"/></svg>` : nothing}</button>`)}
        <hr />
        <button aria-label="Trash"><os-icon name="trash" size="72"></os-icon></button>
      </div>`;
  }
}
